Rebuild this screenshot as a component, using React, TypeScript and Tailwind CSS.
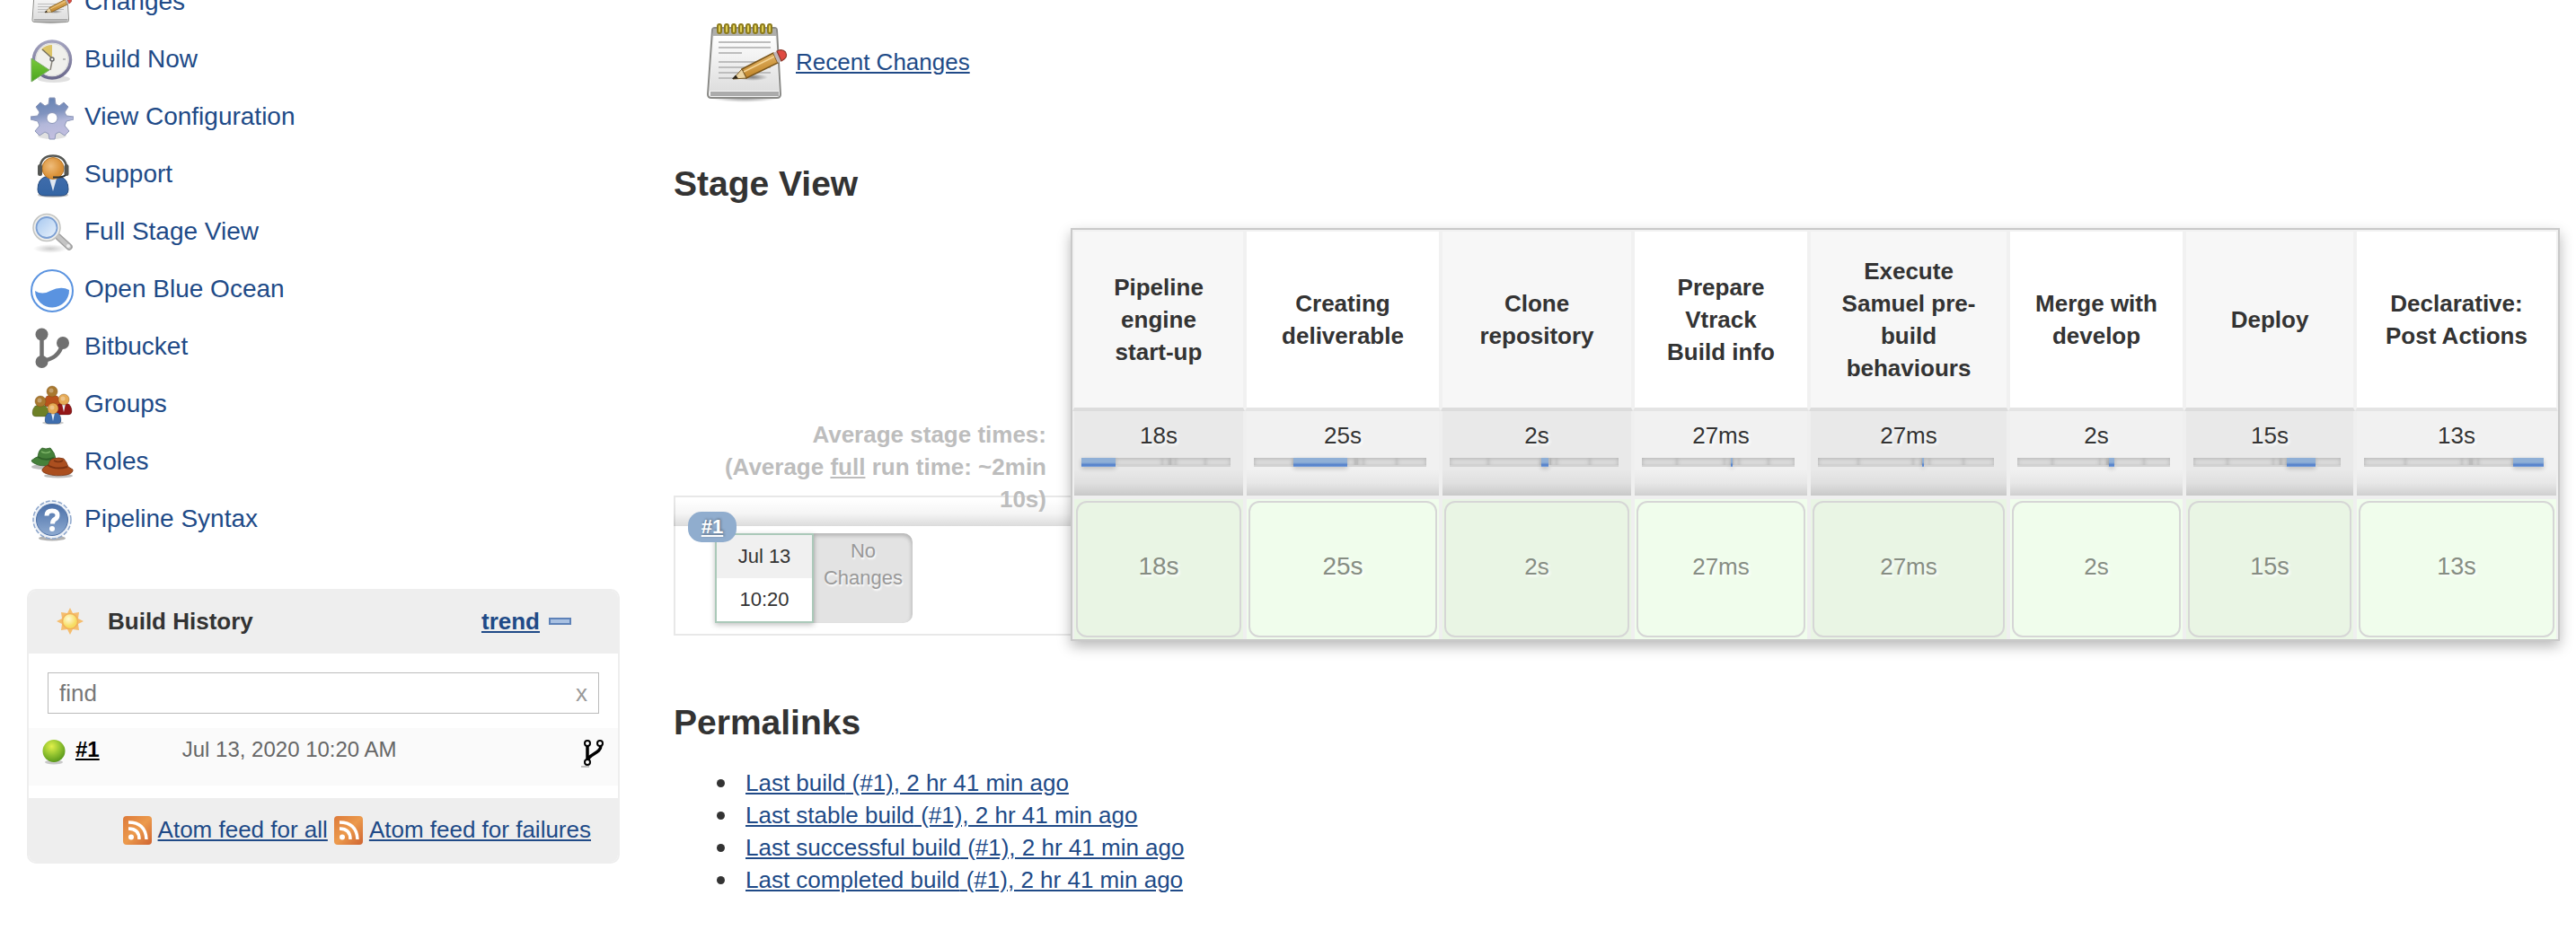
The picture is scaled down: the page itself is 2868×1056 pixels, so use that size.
import React from 'react';

type IconProps = { className?: string };

function NotepadIcon({ className = '', id }: IconProps & { id: string }) {
  return (
    <svg viewBox="0 0 96 96" className={className} aria-hidden="true">
      <defs>
        <linearGradient id={id + 'p'} x1="0" y1="0" x2="0" y2="1">
          <stop offset="0" stopColor="#ffffff" />
          <stop offset="1" stopColor="#dedede" />
        </linearGradient>
        <radialGradient id={id + 's'}>
          <stop offset="0" stopColor="#000" stopOpacity="0.45" />
          <stop offset="1" stopColor="#000" stopOpacity="0" />
        </radialGradient>
        <linearGradient id={id + 'w'} x1="0.3" y1="0" x2="0.6" y2="1">
          <stop offset="0" stopColor="#e9bd72" />
          <stop offset="1" stopColor="#bb7d1e" />
        </linearGradient>
      </defs>
      <ellipse cx="45" cy="89" rx="38" ry="5" fill={'url(#' + id + 's)'} />
      <path d="M12 11h66q3 0 3 3l4 71q0 4-4 4H8q-4 0-4-4L9 14q0-3 3-3z" fill="#f3f3f3" stroke="#8a8a87" strokeWidth="2" />
      <path d="M11 19h68l4 62H6z" fill={'url(#' + id + 'p)'} />
      <path d="M10 12h70v8H10z" fill="#aeaeab" />
      <path d="M7 82h76v5H7z" fill="#ababab" />
      <g stroke="#bdbdbd" strokeWidth="2">
        <path d="M16 27h58M16 33h58M16 39h26M16 49h44M16 55h58M16 61h58M16 67h32" />
      </g>
      <g fill="#e0cf55" stroke="#8d7b1b" strokeWidth="2">
        {[14, 22, 30, 38, 46, 54, 62, 70].map((x) => (
          <rect key={x} x={x + 1} y="7" width="4" height="10" rx="2" />
        ))}
      </g>
      <ellipse cx="54" cy="66" rx="17" ry="4" fill={'url(#' + id + 's)'} />
      <path d="M42 57L77 39l5 11-35 17z" fill={'url(#' + id + 'w)'} stroke="#7a551b" strokeWidth="1.500" />
      <path d="M32 68l10-11 5 10z" fill="#ecd5a3" stroke="#7a5a24" strokeWidth="1" />
      <path d="M31 68l4-4.500 3 4z" fill="#2b2418" />
      <path d="M44 60l34-17" stroke="#f4d596" strokeWidth="1.500" />
      <path d="M77 39l4-2 5 11-4 2z" fill="#bfb6b8" />
      <path d="M81 37q6-3 9.500 1 3.500 6-4.500 10z" fill="#e04a42" stroke="#8d3a2c" strokeWidth="1.200" />
    </svg>
  );
}

function ClockIcon({ className = '' }: IconProps) {
  return (
    <svg viewBox="0 0 48 48" className={className} aria-hidden="true">
      <defs>
        <linearGradient id="clk-r" x1="0" y1="0" x2="0" y2="1">
          <stop offset="0" stopColor="#a3a3bf" />
          <stop offset="1" stopColor="#6b698c" />
        </linearGradient>
        <linearGradient id="clk-g" x1="0" y1="0" x2="0" y2="1">
          <stop offset="0" stopColor="#79c93a" />
          <stop offset="1" stopColor="#4aa51f" />
        </linearGradient>
      </defs>
      <ellipse cx="26" cy="44" rx="18" ry="4" fill="#000" opacity="0.12" />
      <circle cx="24" cy="22.500" r="20.500" fill="#f0f0ec" stroke="url(#clk-r)" strokeWidth="3.500" />
      <circle cx="24" cy="22.500" r="18" fill="none" stroke="#dcdcda" />
      <path d="M24 20L12 11q5-5 12-5z" fill="#dcc468" />
      <path d="M13 11l10 9" stroke="#77735f" strokeWidth="1.500" />
      <path d="M24 24l-2 10" stroke="#88847a" strokeWidth="1.500" />
      <circle cx="24" cy="22" r="2" fill="#eee" stroke="#666" strokeWidth="1.500" />
      <path d="M36 22h3" stroke="#aaa" strokeWidth="1.500" />
      <path d="M1 21l20 13L1 47z" fill="url(#clk-g)" stroke="#7bab66" strokeWidth="1" />
    </svg>
  );
}

function GearIcon({ className = '' }: IconProps) {
  return (
    <svg viewBox="0 0 48 48" className={className} aria-hidden="true">
      <defs>
        <linearGradient id="gear-f" x1="0.4" y1="0" x2="0.6" y2="1">
          <stop offset="0" stopColor="#6683b3" />
          <stop offset="0.35" stopColor="#8093bf" />
          <stop offset="0.6" stopColor="#b3b8da" />
          <stop offset="1" stopColor="#c4bfe0" />
        </linearGradient>
      </defs>
      <ellipse cx="24" cy="43" rx="16" ry="4" fill="#000" opacity="0.12" />
      <g fill="url(#gear-f)" stroke="#8d97b8" strokeWidth="1">
        <path d="M21 1h6l1 7 4 2 5-4 5 5-4 6 2 4 8 1v3l-8 2-2 5 5 6-5 5-6-4-4 2-1 6h-6l-1-6-4-2-6 4-5-5 5-6-2-5-8-2v-3l8-1 2-4-4-6 5-5 5 4 4-2z" strokeLinejoin="round" />
        <circle cx="24" cy="23.500" r="6" fill="#fff" />
      </g>
    </svg>
  );
}

function SupportIcon({ className = '' }: IconProps) {
  return (
    <svg viewBox="0 0 48 48" className={className} aria-hidden="true">
      <defs>
        <radialGradient id="sup-h" cx="0.4" cy="0.4">
          <stop offset="0" stopColor="#efbd7c" />
          <stop offset="1" stopColor="#da9036" />
        </radialGradient>
        <linearGradient id="sup-b" x1="0" y1="0" x2="0" y2="1">
          <stop offset="0" stopColor="#3f6cab" />
          <stop offset="1" stopColor="#3465a4" />
        </linearGradient>
      </defs>
      <ellipse cx="25" cy="45" rx="17" ry="3" fill="#000" opacity="0.25" />
      <path d="M8 39q0-11 8-14h18q8 3 8 14 0 7-8 7H16q-8 0-8-7z" fill="url(#sup-b)" stroke="#24497c" />
      <path d="M21 27h8l-4 14z" fill="#dfe7f1" />
      <circle cx="25" cy="15.500" r="12" fill="url(#sup-h)" stroke="#b9792b" />
      <path d="M10.500 16Q11 1.500 25 1.500T40.500 16" fill="none" stroke="#555754" strokeWidth="2.500" />
      <rect x="8" y="11" width="5" height="13" rx="2.500" fill="#555754" />
      <rect x="37.500" y="11" width="5" height="13" rx="2.500" fill="#555754" />
      <path d="M39 23q-3 3-14 2.500" fill="none" stroke="#2e3436" strokeWidth="2" />
    </svg>
  );
}

function SearchIcon({ className = '' }: IconProps) {
  return (
    <svg viewBox="0 0 48 48" className={className} aria-hidden="true">
      <defs>
        <linearGradient id="mag-g" x1="0" y1="0" x2="1" y2="1">
          <stop offset="0" stopColor="#a6c7ef" />
          <stop offset="1" stopColor="#eaf3fc" />
        </linearGradient>
        <radialGradient id="mag-s">
          <stop offset="0" stopColor="#000" stopOpacity="0.2" />
          <stop offset="1" stopColor="#000" stopOpacity="0" />
        </radialGradient>
      </defs>
      <ellipse cx="22" cy="41" rx="19" ry="5" fill="url(#mag-s)" />
      <path d="M31 28l12 11" stroke="#a0a0a0" strokeWidth="7.500" strokeLinecap="round" />
      <path d="M31 28l12 11" stroke="#c4c4c4" strokeWidth="4.500" strokeLinecap="round" />
      <circle cx="42" cy="38" r="2" fill="#eee" />
      <circle cx="18" cy="17.500" r="15" fill="#eeeeec" stroke="#c2c3c0" strokeWidth="1.500" />
      <circle cx="18" cy="17.500" r="11.500" fill="url(#mag-g)" stroke="#7b9fd3" strokeWidth="1.800" />
    </svg>
  );
}

function OceanIcon({ className = '' }: IconProps) {
  return (
    <svg viewBox="0 0 48 48" className={className} aria-hidden="true">
      <circle cx="24" cy="24" r="23" fill="#fff" stroke="#5a93e0" strokeWidth="2" />
      <path d="M5 24q8 5 17 0 12-6 21-1a19 19 0 0 1-38 1z" fill="#5a93e0" />
    </svg>
  );
}

function ForkIcon({ className = '' }: IconProps) {
  return (
    <svg viewBox="0 0 48 48" className={className} aria-hidden="true">
      <g fill="#707070">
        <circle cx="12.500" cy="8.500" r="7" />
        <circle cx="36" cy="18" r="7" />
        <circle cx="12.500" cy="39" r="7" />
      </g>
      <path d="M12.500 8v31M12.500 38q19-2 23-19" fill="none" stroke="#707070" strokeWidth="4.500" />
    </svg>
  );
}

const people = [
  { x: 24, y: 8, head: '#a8782f', body: '#b9521c' },
  { x: 11, y: 19, head: '#a8782f', body: '#6d8026' },
  { x: 37, y: 17, head: '#e6aa55', body: '#931718' },
  { x: 25, y: 27, head: '#e5a851', body: '#3f6eae' },
];

function GroupsIcon({ className = '' }: IconProps) {
  return (
    <svg viewBox="0 0 48 48" className={className} aria-hidden="true">
      <ellipse cx="25" cy="43" rx="12" ry="2" fill="#000" opacity="0.2" />
      {people.map((p, i) => (
        <g key={i}>
          <path
            d={`M${p.x - 9} ${p.y + 13}q0-7 6-9h6q6 2 6 9 0 4-4 4h-10q-4 0-4-4z`}
            fill={p.body}
            stroke="#000"
            strokeOpacity="0.2"
          />
          {i > 1 && <path d={`M${p.x - 2} ${p.y + 5}h4l-2 9z`} fill="#e6eef6" />}
          <circle cx={p.x} cy={p.y} r="6" fill={p.head} stroke="#7a4a10" strokeOpacity="0.4" />
          <circle cx={p.x - 1} cy={p.y - 1} r="2.500" fill="#fff" opacity="0.3" />
        </g>
      ))}
    </svg>
  );
}

function HatsIcon({ className = '' }: IconProps) {
  return (
    <svg viewBox="0 0 48 48" className={className} aria-hidden="true">
      <ellipse cx="14" cy="28" rx="13" ry="3" fill="#000" opacity="0.25" />
      <ellipse cx="31" cy="38" rx="16" ry="2.500" fill="#000" opacity="0.25" />
      <g transform="translate(0 6)">
        <path d="M1 15q5-4 7-4Q9 3 13 1l4 1 5-1q5 5 6 12 2 5-6 7-10 2-16-1-5-2-5-4z" fill="#46803a" stroke="#2f5f28" strokeWidth="0.800" />
        <path d="M8 11q8 5 18 1" fill="none" stroke="#2f5f28" strokeWidth="2" />
        <path d="M12 5q5 3 10 0" fill="none" stroke="#79b064" strokeWidth="1.500" />
      </g>
      <g transform="translate(0 4)">
        <path d="M13 27q2-4 7-5 1-6 5-7 7-2 12 0 3 3 5 9l5 3q1 4-7 6-12 2-21-1-7-2-6-5z" fill="#ab4f1f" stroke="#7b3312" strokeWidth="0.800" />
        <path d="M19 22q9 6 22 2" fill="none" stroke="#7b3312" strokeWidth="2" />
        <path d="M26 17q5 3 10 0" fill="none" stroke="#7b3312" strokeWidth="1.500" />
      </g>
    </svg>
  );
}

function HelpIcon({ className = '' }: IconProps) {
  return (
    <svg viewBox="0 0 48 48" className={className} aria-hidden="true">
      <defs>
        <linearGradient id="help-f" x1="0" y1="0" x2="0" y2="1">
          <stop offset="0" stopColor="#4a6fa8" />
          <stop offset="1" stopColor="#8fabd1" />
        </linearGradient>
      </defs>
      <ellipse cx="24" cy="43.500" rx="15" ry="3" fill="#000" opacity="0.3" />
      <circle cx="24" cy="23" r="21" fill="#eef2f8" stroke="#8ea7cc" strokeWidth="1.500" strokeDasharray="5 2" />
      <circle cx="24" cy="23" r="17.500" fill="url(#help-f)" stroke="#4c6fa5" />
      <path d="M18 18.500q0-5.500 6-5.500t6 5q0 3-3 4.500-2.500 1.500-2.500 5" fill="none" stroke="#fff" strokeWidth="5" />
      <circle cx="24" cy="33" r="3" fill="#fff" />
    </svg>
  );
}

function SunIcon({ className = '' }: IconProps) {
  return (
    <svg viewBox="0 0 32 32" className={className} aria-hidden="true">
      <defs>
        <radialGradient id="sun-f" cx="0.4" cy="0.35">
          <stop offset="0" stopColor="#fffbd6" />
          <stop offset="1" stopColor="#f7dc62" />
        </radialGradient>
      </defs>
      <path d="M16 1l3 6 7-1-1 7 6 3-6 3 1 7-7-1-3 6-3-6-7 1 1-7-6-3 6-3-1-7 7 1z" fill="#f5bd6e" />
      <circle cx="16" cy="16" r="8.500" fill="url(#sun-f)" stroke="#f0b05a" strokeWidth="1.500" />
    </svg>
  );
}

function BallIcon({ className = '' }: IconProps) {
  return (
    <svg viewBox="0 0 28 32" className={className} aria-hidden="true">
      <defs>
        <radialGradient id="ball-f" cx="0.4" cy="0.3" r="0.7">
          <stop offset="0" stopColor="#e2f04a" />
          <stop offset="0.5" stopColor="#9ac832" />
          <stop offset="1" stopColor="#5b9a1c" />
        </radialGradient>
      </defs>
      <ellipse cx="14" cy="26" rx="10" ry="2.500" fill="#000" opacity="0.2" />
      <circle cx="14" cy="13.500" r="12.500" fill="url(#ball-f)" />
    </svg>
  );
}

function BranchIcon({ className = '' }: IconProps) {
  return (
    <svg viewBox="0 0 28 32" className={className} aria-hidden="true">
      <g fill="#fff" stroke="#000" strokeWidth="2">
        <path d="M8 7v18M23 7c0 10-14 9-15 18" fill="none" strokeWidth="3.500" />
        <circle cx="8" cy="5" r="3" />
        <circle cx="22" cy="5" r="3" />
        <circle cx="8" cy="26" r="3" />
      </g>
      <path d="M1 31h9" stroke="#bbb" strokeWidth="2" />
    </svg>
  );
}

function FeedIcon({ className = '' }: IconProps) {
  return (
    <svg viewBox="0 0 32 32" className={className} aria-hidden="true">
      <defs>
        <linearGradient id="feed-f" x1="0" y1="0" x2="1" y2="1">
          <stop offset="0" stopColor="#dd7a3a" />
          <stop offset="0.5" stopColor="#ec9a4c" />
          <stop offset="1" stopColor="#cf6431" />
        </linearGradient>
      </defs>
      <rect width="32" height="32" rx="4" fill="url(#feed-f)" />
      <circle cx="9" cy="23.500" r="3" fill="#fff" />
      <path d="M6 14q12 0 12 12M6 7q19 0 20 19" fill="none" stroke="#fff" strokeWidth="3.500" />
    </svg>
  );
}

const tasks: { label: string; icon: React.ReactNode }[] = [
  { label: 'Changes', icon: <NotepadIcon id="note-s" className="size-12" /> },
  { label: 'Build Now', icon: <ClockIcon className="size-12" /> },
  { label: 'View Configuration', icon: <GearIcon className="size-12" /> },
  { label: 'Support', icon: <SupportIcon className="size-12" /> },
  { label: 'Full Stage View', icon: <SearchIcon className="size-12" /> },
  { label: 'Open Blue Ocean', icon: <OceanIcon className="size-12" /> },
  { label: 'Bitbucket', icon: <ForkIcon className="size-12" /> },
  { label: 'Groups', icon: <GroupsIcon className="size-12" /> },
  { label: 'Roles', icon: <HatsIcon className="size-12" /> },
  { label: 'Pipeline Syntax', icon: <HelpIcon className="size-12" /> },
];

const stages = [
  { name: 'Pipeline engine start-up', time: '18s', share: 23, width: 192, size: 'text-[28px]' },
  { name: 'Creating deliverable', time: '25s', share: 31.3, width: 218, size: 'text-[28px]' },
  { name: 'Clone repository', time: '2s', share: 4.2, width: 214, size: 'text-[26px]' },
  { name: 'Prepare Vtrack Build info', time: '27ms', share: 0.9, width: 196, size: 'text-[26px]' },
  { name: 'Execute Samuel pre-build behaviours', time: '27ms', share: 0.9, width: 222, size: 'text-[26px]' },
  { name: 'Merge with develop', time: '2s', share: 3.1, width: 196, size: 'text-[26px]' },
  { name: 'Deploy', time: '15s', share: 19.5, width: 190, size: 'text-[27px]' },
  { name: 'Declarative: Post Actions', time: '13s', share: 17.1, width: 226, size: 'text-[27px]' },
];
const totalWidth = stages.reduce((sum, s) => sum + s.width, 0);

const permalinks = ['Last build', 'Last stable build', 'Last successful build', 'Last completed build'];

function StageBar({ active }: { active: number }) {
  return (
    <div className="mr-[14px] ml-2 flex h-[10px]">
      {stages.map((s, i) => (
        <div
          key={i}
          style={{ width: `${s.share}%` }}
          className={
            i === active
              ? 'bg-linear-to-b from-[#8fafd6] from-50% via-[#4f7cc9] via-80% to-[#7ba3dc] shadow-[0_2px_5px_rgba(0,0,0,0.2)]'
              : 'border-b-2 border-[#d2d2d2] bg-[#dedede] shadow-[inset_0_1px_5px_rgba(0,0,0,0.2)]'
          }
        />
      ))}
    </div>
  );
}

function Sidebar() {
  return (
    <aside className="-mt-7 w-[660px] shrink-0">
      <nav>
        <ul>
          {tasks.map((t) => (
            <li key={t.label} className="h-16">
              <a href="#" className="flex h-full items-center gap-3 pl-1 text-[28px] text-[#204a87]">
                {t.icon}
                <span className="pb-1">{t.label}</span>
              </a>
            </li>
          ))}
        </ul>
      </nav>

      <section className="mt-11 overflow-hidden rounded-[10px] border-2 border-[#eee] text-[26px]">
        <header className="flex h-[70px] items-center bg-[#eee] pr-[52px] pb-[2px] pl-[30px]">
          <SunIcon className="size-8" />
          <h2 className="ml-[26px] font-bold">Build History</h2>
          <a href="#" className="ml-auto font-bold text-[#204a87] underline">trend</a>
          <button type="button" aria-label="Collapse" className="ml-[10px] h-2 w-[25px] border-2 border-[#5e82b8] bg-[#a9c1e2]" />
        </header>
        <div className="px-[21px] pt-[21px] pb-4">
          <div className="flex h-[46px] items-center border border-[#bbb] px-3">
            <input
              aria-label="Find builds"
              placeholder="find"
              className="min-w-0 flex-1 outline-none placeholder:text-[#777]"
            />
            <button type="button" aria-label="Clear search" className="text-[#999]">x</button>
          </div>
        </div>
        <div className="flex h-16 items-start bg-[#fafafa] pt-2 pr-[14px] pl-[14px] text-2xl leading-8">
          <BallIcon className="mt-1 h-8 w-7" />
          <a href="#" className="ml-[10px] font-bold text-black underline">#1</a>
          <a href="#" className="ml-[92px] text-[#666]">Jul 13, 2020 10:20 AM</a>
          <BranchIcon className="mt-1 ml-auto h-8 w-7" />
        </div>
        <footer className="mt-[14px] flex h-[71px] items-center justify-end gap-[7px] bg-[#eee] pr-[30px] text-[#204a87]">
          <FeedIcon className="size-8" />
          <a href="#" className="underline">Atom feed for all</a>
          <FeedIcon className="size-8" />
          <a href="#" className="underline">Atom feed for failures</a>
        </footer>
      </section>
    </aside>
  );
}

function RunLabels() {
  return (
    <div className="mb-[6px] flex w-[442px] shrink-0 flex-col justify-end">
      <div className="z-10 -mb-[34px] bg-linear-to-t from-black/14 via-black/4 via-[14px] to-transparent to-[30px] pt-[6px] pr-[27px] pb-3 pl-12 text-right text-[26px] leading-9 font-bold text-[#bdbdbd]">
        <div>Average stage times:</div>
        <div>
          (Average <span className="underline">full</span> run time: ~2min 10s)
        </div>
      </div>
      <div className="h-[156px] border-2 border-r-0 border-[#e8e8e8] pt-10 pl-11 text-[22px]">
        <div className="relative flex h-[100px]">
          <div className="z-10 flex w-[110px] flex-col border-2 border-[#abc9b9] bg-white text-center shadow-[0_2px_6px_rgba(0,0,0,0.25)]">
            <div className="flex-1 bg-[#f0f0f0] leading-[48px]">Jul 13</div>
            <div className="flex-1 leading-[48px]">10:20</div>
          </div>
          <div className="w-[110px] rounded-r-[10px] bg-[#e3e3e3] pt-[5px] text-center leading-[30px] text-[#999] shadow-[inset_-1px_3px_4px_rgba(0,0,0,0.2)] [text-shadow:1px_2px_2px_white]">
            No Changes
          </div>
          <a
            href="#"
            className="absolute -top-6 -left-[30px] z-20 w-[54px] rounded-[15px] bg-[#90adce] text-center leading-[34px] font-bold text-white underline [text-shadow:1px_-1px_3px_rgba(0,0,0,0.4)]"
          >
            #1
          </a>
        </div>
      </div>
    </div>
  );
}

function StageTable() {
  return (
    <div className="min-w-0 flex-1 border-2 border-[#c9c9c9] shadow-[0_6px_14px_rgba(0,0,0,0.28)]">
      <table className="w-full table-fixed border-separate border-spacing-0 text-center text-[26px] leading-9">
        <colgroup>
          {stages.map((s, i) => (
            <col key={i} style={{ width: `${(s.width / totalWidth) * 100}%` }} />
          ))}
        </colgroup>
        <thead>
          <tr>
            {stages.map((s, i) => (
              <th
                key={i}
                className="h-[202px] border-2 border-b-4 border-[#f1f1f1] border-b-[#e4e4e4] bg-white px-6 align-middle odd:border-b-[#dcdcdc] odd:bg-[#f7f7f7]"
              >
                {s.name}
              </th>
            ))}
          </tr>
        </thead>
        <tbody>
          <tr>
            {stages.map((s, i) => (
              <td
                key={i}
                className="h-[96px] border-x-2 border-b-2 border-[#efefef] bg-[#f1f1f1] bg-linear-to-t from-black/14 via-black/4 via-[14px] to-transparent to-[30px] bg-clip-padding bg-origin-padding pt-[9px] align-top odd:bg-[#e9e9e9]"
              >
                <div className="pb-[7px] [text-shadow:2px_2px_3px_white]">{s.time}</div>
                <StageBar active={i} />
              </td>
            ))}
          </tr>
          <tr>
            {stages.map((s, i) => (
              <td
                key={i}
                className="h-[158px] border-2 border-b-0 border-[#efefef] bg-[#f0fdec] p-[2px] odd:bg-[#e9f5e4]"
              >
                <div className={`h-[152px] rounded-xl border-2 border-[#d6d6d6] leading-[142px] text-[#868d83] [text-shadow:2px_2px_3px_white] ${s.size}`}>
                  {s.time}
                </div>
              </td>
            ))}
          </tr>
        </tbody>
      </table>
    </div>
  );
}

export default function App() {
  return (
    <div className="flex min-h-screen gap-[60px] overflow-hidden bg-white pr-[18px] pl-[30px] font-['Liberation_Sans',Arial,sans-serif] text-[#333]">
      <Sidebar />
      <main className="min-w-0 flex-1 pt-5">
        <div className="flex items-center gap-[6px] pl-[34px] text-[26px]">
          <NotepadIcon id="note-l" className="size-24" />
          <a href="#" className="pt-[2px] text-[#204a87] underline">Recent Changes</a>
        </div>
        <h2 className="mt-16 text-[39px] leading-[50px] font-bold">Stage View</h2>
        <div className="mt-6 flex">
          <RunLabels />
          <StageTable />
        </div>
        <h2 className="mt-[66px] text-[39px] leading-[50px] font-bold">Permalinks</h2>
        <ul className="mt-6 pl-12 text-[26px] leading-9">
          {permalinks.map((p) => (
            <li key={p} className="flex items-center gap-[23px]">
              <span className="size-[9px] rounded-full bg-[#333]" />
              <a href="#" className="text-[#204a87] underline">{p} (#1), 2 hr 41 min ago</a>
            </li>
          ))}
        </ul>
      </main>
    </div>
  );
}
